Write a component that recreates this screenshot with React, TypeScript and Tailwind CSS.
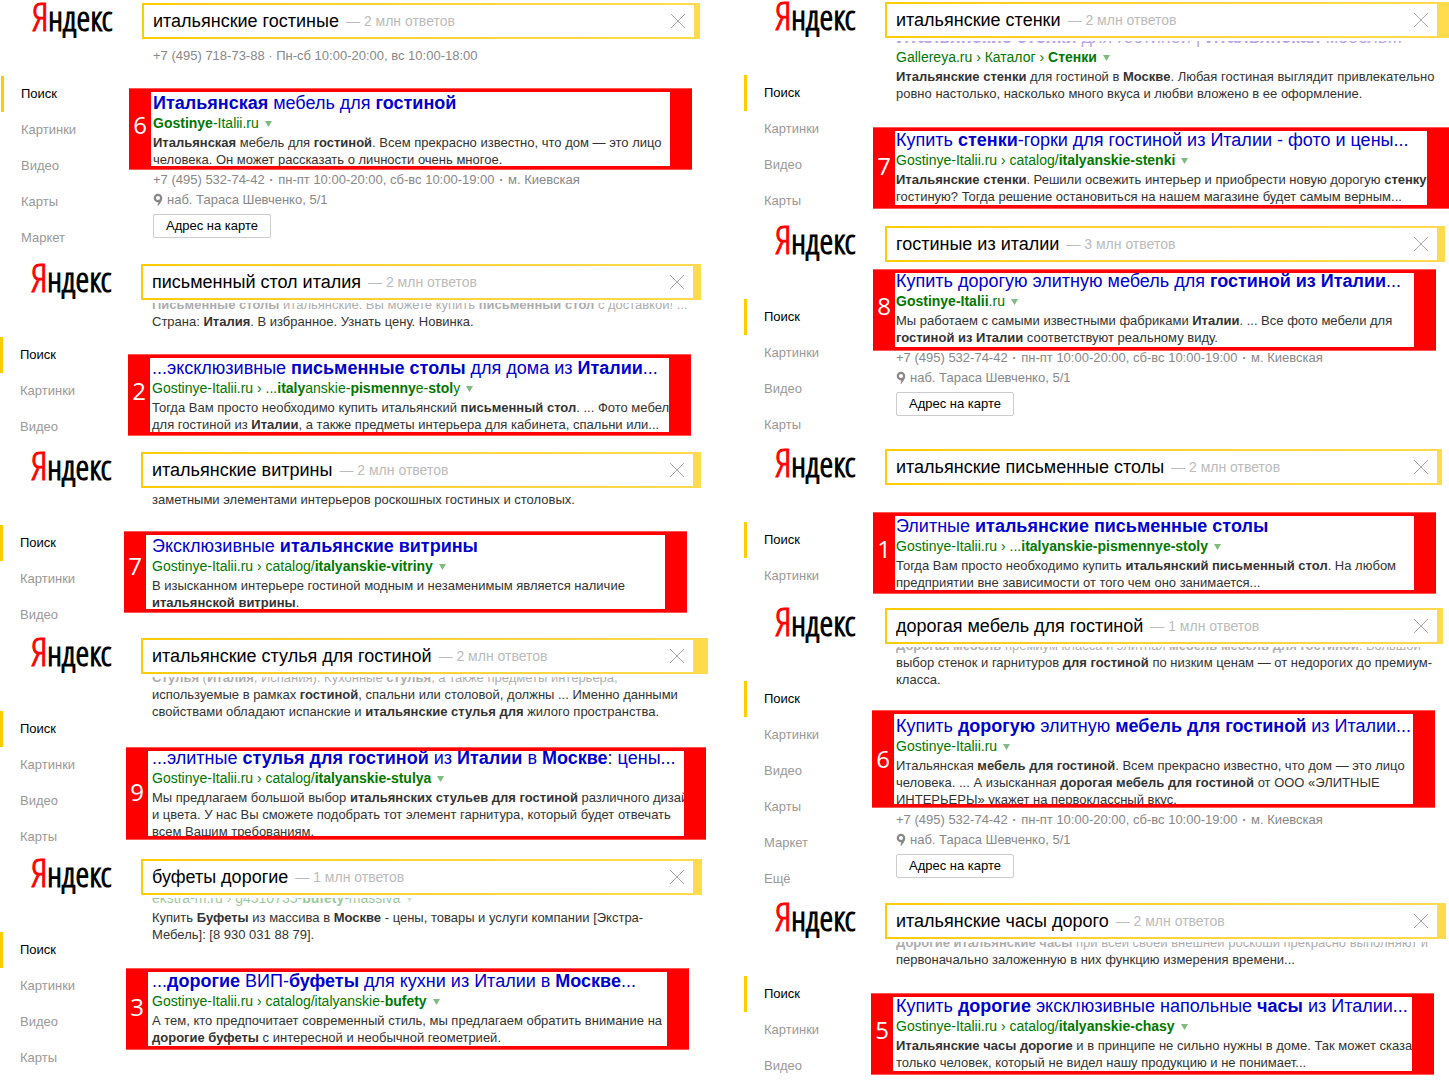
import React, { useState } from "react";

type LineKind = "text" | "url" | "title" | "phone";

interface ContextLine {
  kind: LineKind;
  text: string;
  faded?: boolean;
}

interface Panel {
  query: string;
  count: string;
  nav: string[];
  frame: string;
  searchBar: string;
  contextHeight: string;
  context: ContextLine[];
  place: string;
  placePad: string;
  box: string;
  body: string;
  title: string;
  url: string;
  snippet: string[];
  contacts?: string;
}

const NAV = ["Поиск", "Картинки", "Видео", "Карты", "Маркет", "Ещё"];

const LEFT: Panel[] = [
  {
    query: "итальянские гостиные",
    count: "2 млн ответов",
    nav: NAV.slice(0, 5),
    frame: "ml-px pb-2",
    searchBar: "mr-[44px] pr-[6px]",
    contextHeight: "h-[22px]",
    context: [{ kind: "phone", text: "+7 (495) 718-73-88 · Пн-сб 10:00-20:00, вс 10:00-18:00" }],
    place: "6",
    placePad: "pb-2",
    box: "mt-6 -ml-[13px] mr-[52px]",
    body: "h-[74px] pl-[2px] pt-px",
    title: "**Итальянская** мебель для **гостиной**",
    url: "**Gostinye**-Italii.ru",
    snippet: [
      "**Итальянская** мебель для **гостиной**. Всем прекрасно известно, что дом — это лицо",
      "человека. Он может рассказать о личности очень многое.",
    ],
    contacts: "",
  },
  {
    query: "письменный стол италия",
    count: "2 млн ответов",
    nav: NAV.slice(0, 3),
    frame: "pb-[7px]",
    searchBar: "mr-[43px] pr-[8px]",
    contextHeight: "h-[27px]",
    context: [
      { kind: "text", text: "**Письменные столы** итальянские. Вы можете купить **письменный стол** с доставкой! ...", faded: true },
      { kind: "text", text: "Страна: **Италия**. В избранное. Узнать цену. Новинка." },
    ],
    place: "2",
    placePad: "pb-2",
    box: "mt-6 -ml-[13px] mr-[53px]",
    body: "h-[74px] pl-[2px]",
    title: "...эксклюзивные **письменные столы** для дома из **Италии**...",
    url: "Gostinye-Italii.ru › ...**italy**anskie-**pismenny**e-**stol**y",
    snippet: [
      "Тогда Вам просто необходимо купить итальянский **письменный стол**. ... Фото мебели",
      "для гостиной из **Италии**, а также предметы интерьера для кабинета, спальни или...",
    ],
  },
  {
    query: "итальянские витрины",
    count: "2 млн ответов",
    nav: NAV.slice(0, 3),
    frame: "pb-[5px]",
    searchBar: "mr-[43px] pr-[8px]",
    contextHeight: "h-[17px]",
    context: [{ kind: "text", text: "заметными элементами интерьеров роскошных гостиных и столовых." }],
    place: "7",
    placePad: "pb-3",
    box: "mt-[23px] -ml-[17px] mr-[57px]",
    body: "h-[74px] pl-[6px] pt-px",
    title: "Эксклюзивные **итальянские витрины**",
    url: "Gostinye-Italii.ru › catalog/**italyanskie-vitriny**",
    snippet: [
      "В изысканном интерьере гостиной модным и незаменимым является наличие",
      "**итальянской витрины**.",
    ],
  },
  {
    query: "итальянские стулья для гостиной",
    count: "2 млн ответов",
    nav: NAV.slice(0, 4),
    frame: "pb-1",
    searchBar: "mr-[36px] pr-[15px]",
    contextHeight: "h-[43px]",
    context: [
      { kind: "text", text: "**Стулья** (**Италия**, Испания). Кухонные **стулья**, а также предметы интерьера,", faded: true },
      { kind: "text", text: "используемые в рамках **гостиной**, спальни или столовой, должны ... Именно данными" },
      { kind: "text", text: "свойствами обладают испанские и **итальянские стулья для** жилого пространства." },
    ],
    place: "9",
    placePad: "pb-1",
    box: "mt-[27px] -ml-[15px] mr-[38px]",
    body: "h-[85px] pl-[4px] *:first:-mt-[3px]",
    title: "...элитные **стулья для гостиной** из **Италии** в **Москве**: цены...",
    url: "Gostinye-Italii.ru › catalog/**italyanskie-stulya**",
    snippet: [
      "Мы предлагаем большой выбор **итальянских стульев для гостиной** различного дизайна",
      "и цвета. У нас Вы сможете подобрать тот элемент гарнитура, который будет отвечать",
      "всем Вашим требованиям.",
    ],
  },
  {
    query: "буфеты дорогие",
    count: "1 млн ответов",
    nav: NAV.slice(0, 4),
    frame: "",
    searchBar: "mr-[42px] pr-[9px]",
    contextHeight: "h-[45px]",
    context: [
      { kind: "url", text: "ekstra-m.ru › g4510735-**bufety**-massiva", faded: true },
      { kind: "text", text: "Купить **Буфеты** из массива в **Москве** - цены, товары и услуги компании [Экстра-" },
      { kind: "text", text: "Мебель]: [8 930 031 88 79]." },
    ],
    place: "3",
    placePad: "pb-1",
    box: "mt-[25px] -ml-[15px] mr-[55px]",
    body: "h-[74px] pl-[4px] *:first:-mt-px",
    title: "...**дорогие** ВИП-**буфеты** для кухни из Италии в **Москве**...",
    url: "Gostinye-Italii.ru › catalog/italyanskie-**bufety**",
    snippet: [
      "А тем, кто предпочитает современный стиль, мы предлагаем обратить внимание на",
      "**дорогие буфеты** с интересной и необычной геометрией.",
    ],
  },
];

const RIGHT: Panel[] = [
  {
    query: "итальянские стенки",
    count: "2 млн ответов",
    nav: NAV.slice(0, 4),
    frame: "pb-[7px]",
    searchBar: "pr-[12px]",
    contextHeight: "h-[61px]",
    context: [
      { kind: "title", text: "**Итальянские стенки** для гостиной | **Итальянская** мебель...", faded: true },
      { kind: "url", text: "Gallereya.ru › Каталог › **Стенки**" },
      { kind: "text", text: "**Итальянские стенки** для гостиной в **Москве**. Любая гостиная выглядит привлекательно" },
      { kind: "text", text: "ровно настолько, насколько много вкуса и любви вложено в ее оформление." },
    ],
    place: "7",
    placePad: "pb-1",
    box: "mt-[25px] -ml-3",
    body: "h-[74px] pl-px *:first:-mt-px",
    title: "Купить **стенки**-горки для гостиной из Италии - фото и цены...",
    url: "Gostinye-Italii.ru › catalog/**italyanskie-stenki**",
    snippet: [
      "**Итальянские стенки**. Решили освежить интерьер и приобрести новую дорогую **стенку** в",
      "гостиную? Тогда решение остановиться на нашем магазине будет самым верным...",
    ],
  },
  {
    query: "гостиные из италии",
    count: "3 млн ответов",
    nav: NAV.slice(0, 4),
    frame: "pb-[6px]",
    searchBar: "mr-[4px] pr-[8px]",
    contextHeight: "",
    context: [],
    place: "8",
    placePad: "pb-2",
    box: "mt-[7px] -ml-3 mr-[13px]",
    body: "h-[74px] pl-px *:first:-mt-[2px]",
    title: "Купить дорогую элитную мебель для **гостиной из Италии**...",
    url: "**Gostinye-Italii**.ru",
    snippet: [
      "Мы работаем с самыми известными фабриками **Италии**. ... Все фото мебели для",
      "**гостиной из Италии** соответствуют реальному виду.",
    ],
    contacts: "-mt-[3px]",
  },
  {
    query: "итальянские письменные столы",
    count: "2 млн ответов",
    nav: NAV.slice(0, 2),
    frame: "pb-[14px]",
    searchBar: "mr-[7px] pr-[5px]",
    contextHeight: "",
    context: [],
    place: "1",
    placePad: "pb-2",
    box: "mt-[27px] -ml-3 mr-[13px]",
    body: "h-[74px] pl-px",
    title: "Элитные **итальянские письменные столы**",
    url: "Gostinye-Italii.ru › ...**italyanskie-pismennye-stoly**",
    snippet: [
      "Тогда Вам просто необходимо купить **итальянский письменный стол**. На любом",
      "предприятии вне зависимости от того чем оно занимается...",
    ],
  },
  {
    query: "дорогая мебель для гостиной",
    count: "1 млн ответов",
    nav: NAV,
    frame: "pb-[6px]",
    searchBar: "mr-[6px] pr-[6px]",
    contextHeight: "h-[41px]",
    context: [
      { kind: "text", text: "**Дорогая мебель** премиум класса и элитная **мебель мебель для гостиной**. Большой", faded: true },
      { kind: "text", text: "выбор стенок и гарнитуров **для гостиной** по низким ценам — от недорогих до премиум-" },
      { kind: "text", text: "класса." },
    ],
    place: "6",
    placePad: "",
    box: "mt-[22px] -ml-[13px] mr-[14px]",
    body: "h-[90px] pl-[2px] pt-[2px]",
    title: "Купить **дорогую** элитную **мебель для гостиной** из Италии...",
    url: "Gostinye-Italii.ru",
    snippet: [
      "Итальянская **мебель для гостиной**. Всем прекрасно известно, что дом — это лицо",
      "человека. ... А изысканная **дорогая мебель для гостиной** от ООО «ЭЛИТНЫЕ",
      "ИНТЕРЬЕРЫ» укажет на первоклассный вкус.",
    ],
    contacts: "mt-[2px]",
  },
  {
    query: "итальянские часы дорого",
    count: "2 млн ответов",
    nav: NAV.slice(0, 3),
    frame: "",
    searchBar: "mr-[3px] pr-[9px]",
    contextHeight: "h-[26px]",
    context: [
      { kind: "text", text: "**Дорогие итальянские часы** при всей своей внешней роскоши прекрасно выполняют и", faded: true },
      { kind: "text", text: "первоначально заложенную в них функцию измерения времени..." },
    ],
    place: "5",
    placePad: "pb-2",
    box: "mt-[25px] -ml-[14px] mr-[15px]",
    body: "h-[74px] pl-[3px] *:first:-mt-px",
    title: "Купить **дорогие** эксклюзивные напольные **часы** из Италии...",
    url: "Gostinye-Italii.ru › catalog/**italyanskie-chasy**",
    snippet: [
      "**Итальянские часы дорогие** и в принципе не сильно нужны в доме. Так может сказать",
      "только человек, который не видел нашу продукцию и не понимает...",
    ],
  },
];

const lineStyles: Record<LineKind, string> = {
  text: "text-[13px] leading-[17px] text-[#333]",
  phone: "text-[13px] leading-[17px] text-[#888]",
  url: "mb-px text-[14px] leading-5 text-[#007700]",
  title: "text-[18px] leading-5 text-[#551acc]",
};

// **word** marks the parts that match the query
function Rich({ text }: { text: string }) {
  return (
    <>
      {text.split("**").map((part, i) => (i % 2 ? <b key={i}>{part}</b> : <span key={i}>{part}</span>))}
    </>
  );
}

function Arrow() {
  return (
    <svg viewBox="0 0 7 6" className="ml-[6px] inline-block h-[6px] w-[7px] align-[1px]">
      <path d="M0 0h7L3.5 6z" fill="#7fbb7f" />
    </svg>
  );
}

function Logo() {
  return (
    <a href="#" aria-label="Яндекс" className="block h-[73px] pl-8">
      <svg
        viewBox="0 0 90 36"
        className="block h-9 w-[90px] overflow-visible"
        fontFamily="'Open Sans Condensed Light','Open Sans Condensed',sans-serif"
        fontWeight="300"
      >
        <text x="-1" y="28" fontSize="39" fill="#f00" stroke="#f00" strokeWidth="1">
          Я
        </text>
        <text x="15" y="28" fontSize="35" fill="#000" stroke="#000" strokeWidth="1.2">
          ндекс
        </text>
      </svg>
    </a>
  );
}

function Search({ panel }: { panel: Panel }) {
  const [value, setValue] = useState(panel.query);

  return (
    <form
      onSubmit={(e) => e.preventDefault()}
      className={`flex h-9 bg-linear-to-r from-[#ffcc00] to-[#ffdb4d] py-[2px] pl-[2px] ${panel.searchBar}`}
    >
      <div className="flex min-w-0 flex-1 items-center bg-white px-[9px]">
        <input
          type="text"
          aria-label="Поиск"
          value={value}
          onChange={(e) => setValue(e.target.value)}
          className="field-sizing-content text-[18px] leading-6 text-black outline-none"
        />
        <span className="ml-[7px] whitespace-nowrap text-[14px] leading-6 text-[#bbb]">— {panel.count}</span>
        <button type="button" aria-label="Очистить" onClick={() => setValue("")} className="ml-auto">
          <svg viewBox="0 0 14 14" className="h-[14px] w-[14px]" stroke="#aaa" strokeWidth="1">
            <path d="M0 0L14 14M14 0L0 14" />
          </svg>
        </button>
      </div>
    </form>
  );
}

function Contacts({ className }: { className: string }) {
  const details = ["+7 (495) 532-74-42", "пн-пт 10:00-20:00, сб-вс 10:00-19:00", "м. Киевская"];

  return (
    <div className={`pl-[11px] text-[13px] leading-5 text-[#888] ${className}`}>
      <p className="whitespace-nowrap">
        {details.map((item, i) => (
          <span key={item}>
            {i > 0 && <b className="mx-px"> · </b>}
            {item}
          </span>
        ))}
      </p>
      <p className="flex items-center whitespace-nowrap">
        <svg viewBox="0 0 10 14" className="mr-1 h-[14px] w-[10px]" fill="none" stroke="#888">
          <circle cx="5" cy="5" r="3.2" strokeWidth="2.2" />
          <path d="M8.6 5.5C8.4 8.5 6.8 10.5 5 12.5C5.3 11 5.4 10 5.4 8.6z" fill="#888" strokeWidth="0.8" />
        </svg>
        наб. Тараса Шевченко, 5/1
      </p>
      <button type="button" className="mt-1 block h-6 rounded-[2px] border border-[#ccc] bg-white px-3 leading-[22px] text-black">
        Адрес на карте
      </button>
    </div>
  );
}

function PanelView({ panel }: { panel: Panel }) {
  return (
    <section className={`flex ${panel.frame}`}>
      <div className="w-[141px] shrink-0">
        <Logo />
        <nav>
          {panel.nav.map((item, i) => (
            <a
              key={item}
              href="#"
              className={`block h-9 border-l-3 pl-[17px] text-[13px] leading-[35px] ${
                i === 0 ? "border-[#ffcc00] text-black" : "border-transparent text-[#999]"
              }`}
            >
              {item}
            </a>
          ))}
        </nav>
      </div>

      <div className="min-w-0 flex-1">
        <Search panel={panel} />

        {panel.context.length > 0 && (
          <div className={`mt-[3px] flex flex-col justify-end overflow-hidden pl-[11px] ${panel.contextHeight}`}>
            {panel.context.map((line) => (
              <p
                key={line.text}
                className={`shrink-0 whitespace-nowrap ${lineStyles[line.kind]} ${line.faded ? "opacity-40" : ""}`}
              >
                <Rich text={line.text} />
                {line.kind === "url" && <Arrow />}
              </p>
            ))}
          </div>
        )}

        {/* Highlighted result with its place in the results */}
        <article className={`flex border-y border-[#ff5555] bg-[#ff0000] py-[3px] ${panel.box}`}>
          <div
            className={`flex w-[22px] shrink-0 items-center justify-center font-['Open_Sans',sans-serif] text-[24px] leading-6 text-white ${panel.placePad}`}
          >
            {panel.place}
          </div>
          <div className={`min-w-0 flex-1 overflow-hidden whitespace-nowrap bg-white ${panel.body}`}>
            <h2 className="text-[18px] leading-5">
              <a href="#" className="text-[#0000cc]">
                <Rich text={panel.title} />
              </a>
            </h2>
            <p className={lineStyles.url}>
              <Rich text={panel.url} />
              <Arrow />
            </p>
            {panel.snippet.map((line) => (
              <p key={line} className={lineStyles.text}>
                <Rich text={line} />
              </p>
            ))}
          </div>
          <div className="w-[22px] shrink-0" />
        </article>

        {panel.contacts !== undefined && <Contacts className={panel.contacts} />}
      </div>
    </section>
  );
}

export default function App() {
  return (
    <main className="grid grid-cols-[744fr_705fr] bg-white font-['Liberation_Sans',Arial,sans-serif]">
      <div className="min-w-0 pt-[3px]">
        {LEFT.map((panel) => (
          <PanelView key={panel.query} panel={panel} />
        ))}
      </div>
      <div className="min-w-0 pt-[2px]">
        {RIGHT.map((panel) => (
          <PanelView key={panel.query} panel={panel} />
        ))}
      </div>
    </main>
  );
}
